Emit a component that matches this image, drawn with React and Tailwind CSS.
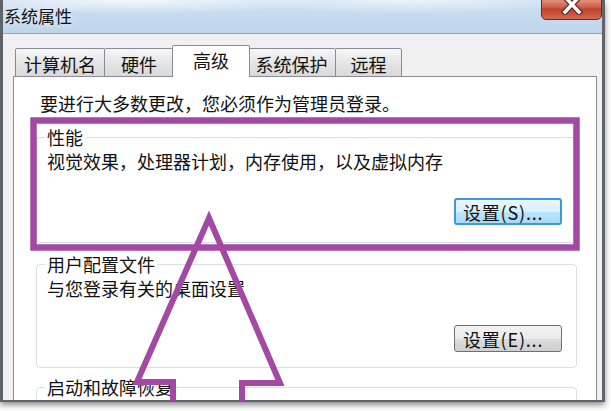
import React from "react";

// Win7 "系统属性" dialog, advanced tab, with a purple paint annotation on top.
const TABS = [
  { label: "计算机名", w: "w-[90px]" },
  { label: "硬件", w: "w-[70px]" },
  { label: "高级", w: "w-[78px]", active: true },
  { label: "系统保护", w: "w-[89px]" },
  { label: "远程", w: "w-[67px]" },
];

function Tab({ label, w, active }) {
  if (active) {
    return (
      <div className={`${w} h-[32px] -mx-[2px] relative z-10 bg-white border border-b-0 border-[#898c95] rounded-t-[2px] flex items-start justify-center pt-[2px] text-[18px] leading-[24px]`}>
        {label}
      </div>
    );
  }
  return (
    <div className={`${w} h-[29px] -ml-px first:ml-0 bg-[linear-gradient(180deg,#f6f6f6,#e4e4e4_55%,#d9d9d9)] border border-[#898c95] rounded-t-[2px] flex items-start justify-center pt-[3px] text-[18px] leading-[24px]`}>
      {label}
    </div>
  );
}

function WinButton({ children, focused }) {
  return (
    <button
      className={
        focused
          ? "w-[108px] h-[27px] rounded-[3px] border-2 border-[#3c9ad8] bg-[linear-gradient(180deg,#eaf6fd,#d9f0fc_50%,#bee6fd_51%,#a7d9f5)] text-[18px] leading-[22px] text-left pl-[7px] tracking-[0.8px]"
          : "w-[108px] h-[27px] rounded-[3px] border border-[#707070] bg-[linear-gradient(180deg,#f2f2f2,#ebebeb_50%,#dddddd_51%,#cfcfcf)] text-[18px] leading-[22px] text-left pl-[8px] tracking-[0.8px]"
      }
    >
      {children}
    </button>
  );
}

function Group({ title, desc, button, focused, pb }) {
  return (
    <fieldset className={`border border-[#d5dfe5] rounded-[4px] ${pb}`}>
      <legend className="ml-[8px] px-[2px] text-[18px] leading-[22px]">{title}</legend>
      {desc && <p className="pl-[10px] pt-[2px] text-[18px] leading-[22px]">{desc}</p>}
      {button && (
        <div className="flex justify-end pr-[14px] mt-[26px]">
          <WinButton focused={focused}>{button}</WinButton>
        </div>
      )}
    </fieldset>
  );
}

export default function App() {
  return (
    <div className="w-[611px] h-[411px] bg-white relative overflow-hidden text-[#111] font-['Noto_Sans_CJK_SC','Microsoft_YaHei',sans-serif]">
      {/* window */}
      <div className="w-[605px] h-[402px] flex flex-col overflow-hidden border-l-[3px] border-r-[3px] border-b-[2px] border-[#5f646b] shadow-[0_3px_6px_rgba(0,0,0,0.45)]">
        {/* title bar */}
        <div className="h-[34px] shrink-0 relative border-b border-[#8fa5bb] bg-[radial-gradient(ellipse_at_22%_0%,rgba(255,255,255,0.75),transparent_30%),radial-gradient(ellipse_at_68%_0%,rgba(255,255,255,0.6),transparent_30%),linear-gradient(180deg,#cfe1f2,#c3d9ee_60%,#bed5eb)]">
          <span className="absolute left-[1px] top-[4px] text-[17px] leading-[24px] [text-shadow:0_0_6px_#fff]">系统属性</span>
          <div className="absolute right-0 top-[-4px] w-[61px] h-[24px] rounded-b-[5px] border border-[#6b2a20] bg-[linear-gradient(180deg,#e8a493,#d0624a_45%,#c0432c_55%,#d1694d)] flex justify-center">
            <svg width="22" height="18" viewBox="0 0 22 18">
              <path d="M4 0 L18 15 M18 0 L4 15" stroke="#5a2a22" strokeWidth="6" strokeLinecap="square" />
              <path d="M4 0 L18 15 M18 0 L4 15" stroke="#fff" strokeWidth="3.5" strokeLinecap="square" />
            </svg>
          </div>
        </div>

        {/* body */}
        <div className="flex-1 min-h-0 bg-[#f0f0f0] pt-[11px] pl-[10px] pr-[5px] flex flex-col">
          <div className="flex items-end pl-[2px] -mb-px relative z-10">
            {TABS.map((t) => (
              <Tab key={t.label} {...t} />
            ))}
          </div>
          <div className="h-[400px] shrink-0 bg-white border border-[#898c95] pt-[15px] pl-[22px] pr-[19px]">
            <p className="pl-[4px] text-[18px] leading-[22px]">要进行大多数更改，您必须作为管理员登录。</p>
            <div className="mt-[12px]">
              <Group title="性能" desc="视觉效果，处理器计划，内存使用，以及虚拟内存" button="设置(S)..." focused pb="pb-[17px]" />
            </div>
            <div className="mt-[10px]">
              <Group title="用户配置文件" desc="与您登录有关的桌面设置" button="设置(E)..." pb="pb-[15px]" />
            </div>
            <div className="mt-[8px]">
              <Group title="启动和故障恢复" pb="pb-[60px]" />
            </div>
          </div>
        </div>
      </div>

      {/* paint annotation */}
      <svg className="absolute inset-0 pointer-events-none" width="611" height="411" viewBox="0 0 611 411">
        <rect x="33.5" y="120.5" width="543" height="127" fill="none" stroke="#a349a4" strokeWidth="6.5" />
        <polyline
          points="173,401 173,382 137,382 209,218 280,383 242,383 242,401"
          fill="none"
          stroke="#a349a4"
          strokeWidth="6"
          strokeLinejoin="miter"
        />
      </svg>
    </div>
  );
}
